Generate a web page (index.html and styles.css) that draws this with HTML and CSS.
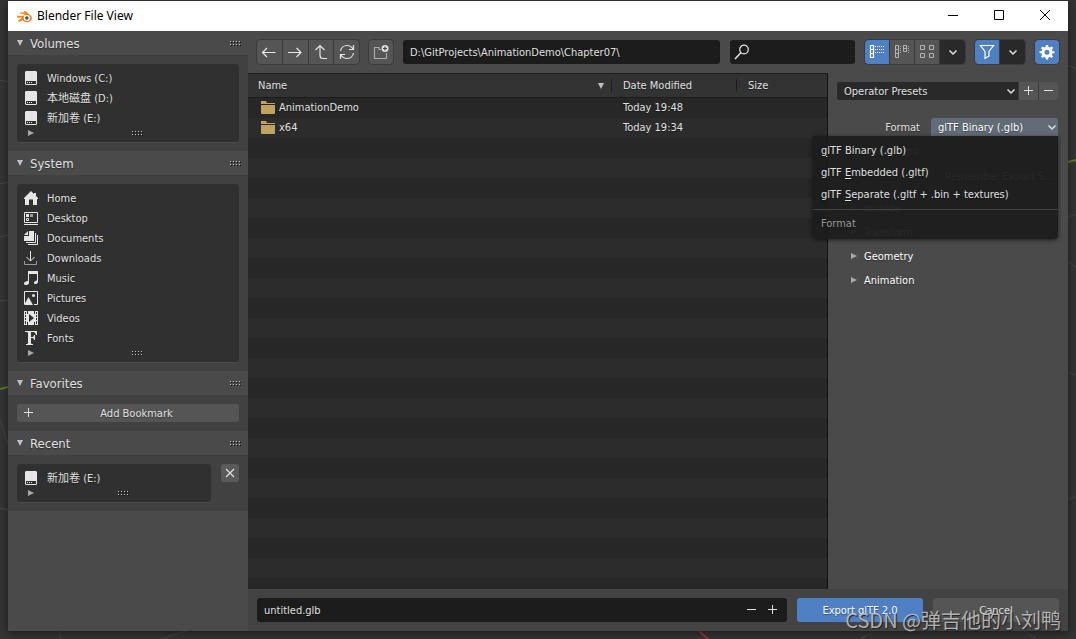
FILE: index.html
```html
<!DOCTYPE html>
<html lang="en">
<head>
<meta charset="utf-8">
<title>Blender File View</title>
<link rel="stylesheet" href="styles.css">
</head>
<body>
<svg class="viewport" viewBox="0 0 1076 639" preserveAspectRatio="none" aria-hidden="true">
  <g stroke="#464646" fill="none">
    <path d="M0 80l8 2M0 184l8-2M0 237l8-2M0 301l8-1M0 420l8 25M0 508l8 2M59 631l2 8M160 639l26-8M860 639l12-6M1024 631l14 8M1068 65l8 4M1068 217l8-3M1068 262l8 5M1068 372l8 3M1068 500l8-4"/>
  </g>
  <path d="M0 389l8-2M1068 162l8-2" stroke="#5c7a1e" stroke-width="2"/>
  <path d="M699 631l9 8" stroke="#9c3046" stroke-width="2"/>
</svg>

<svg class="defs" aria-hidden="true">
  <symbol id="disk" viewBox="0 0 16 16">
    <path fill="#e6e6e6" d="M3 1h10l1 1v8H2V2z"/><path fill="#e6e6e6" fill-rule="evenodd" d="M2 9h12v5l-1 1H3l-1-1zm1 2v3h10v-3z"/><path fill="#e6e6e6" d="M4 12h1v1H4zM6 12h1v1H6zM8 12h1v1H8z"/>
  </symbol>
  <symbol id="dots" viewBox="0 0 12 6">
    <path fill="#141414" d="M1 2h1v1H1zM4 2h1v1H4zM7 2h1v1H7zM10 2h1v1h-1zM1 5h1v1H1zM4 5h1v1H4zM7 5h1v1H7zM10 5h1v1h-1z"/>
    <path fill="#c4c4c4" d="M0 1h1v1H0zM3 1h1v1H3zM6 1h1v1H6zM9 1h1v1H9zM0 4h1v1H0zM3 4h1v1H3zM6 4h1v1H6zM9 4h1v1H9z"/>
  </symbol>
  <symbol id="down" viewBox="0 0 8 8"><path fill="#c0c0c0" d="M1 1h6L4 7z"/></symbol>
  <symbol id="right" viewBox="0 0 8 8"><path fill="#a8a8a8" d="M1 1l6 3-6 3z"/></symbol>
  <symbol id="chevron" viewBox="0 0 10 10"><path fill="none" stroke="#e0e0e0" stroke-width="1.5" d="M1.500 3.500L5 7l3.500-3.500"/></symbol>
  <symbol id="folder" viewBox="0 0 16 16"><path fill="#c0a35c" d="M1 1h5l1 2h8v1H1zM1 5h14v8l-.5 1h-13L1 13z"/></symbol>
  <symbol id="plus" viewBox="0 0 10 10"><path stroke="#e0e0e0" d="M0 4.500h9M4.500 0v9"/></symbol>
  <symbol id="minus" viewBox="0 0 10 10"><path stroke="#e0e0e0" d="M0 4.500h9"/></symbol>
</svg>

<div class="window">
  <header class="titlebar">
    <svg class="logo" viewBox="0 0 16 14" aria-hidden="true">
      <path fill="#f08219" d="M8.300.8L15 6.200c1.400 1.700 1 4.100-.5 5.500-2.600 2.500-7 1.900-8.700-.8L2.500 13 1 11.500 5.500 8H0V6.300h4.500L9 6 7 4H3V2.600h5.400L7.200 1.500z"/>
      <circle cx="10.500" cy="8.600" r="3.300" fill="#fff"/><circle cx="10.500" cy="8.600" r="1.900" fill="#265787"/>
    </svg>
    <h1 class="title">Blender File View</h1>
    <div class="caption">
      <button aria-label="Minimize"><svg viewBox="0 0 12 12"><path d="M1 5.500h10"/></svg></button>
      <button aria-label="Maximize"><svg viewBox="0 0 12 12"><path d="M1.500.5h9v9h-9z"/></svg></button>
      <button aria-label="Close"><svg viewBox="0 0 12 12"><path d="M1 0l10 10M11 0L1 10"/></svg></button>
    </div>
  </header>

  <div class="content">
    <aside class="sidebar">
      <section class="panel">
        <h2 class="panel-head"><svg class="tri"><use href="#down"/></svg>Volumes<svg class="dots"><use href="#dots"/></svg></h2>
        <div class="panel-body">
          <div class="box">
            <button class="place"><svg class="icon"><use href="#disk"/></svg>Windows (C:)</button>
            <button class="place"><svg class="icon"><use href="#disk"/></svg>本地磁盘 (D:)</button>
            <button class="place"><svg class="icon"><use href="#disk"/></svg>新加卷 (E:)</button>
            <div class="box-foot"><svg class="tri"><use href="#right"/></svg><svg class="dots"><use href="#dots"/></svg></div>
          </div>
        </div>
      </section>

      <section class="panel">
        <h2 class="panel-head"><svg class="tri"><use href="#down"/></svg>System<svg class="dots"><use href="#dots"/></svg></h2>
        <div class="panel-body">
          <div class="box">
            <button class="place"><svg class="icon" viewBox="0 0 16 16"><path fill="#e6e6e6" d="M8 1L1 8v1h1v6h4V9.500h4V15h4V9h1V8l-2-2V3h-2v1z"/></svg>Home</button>
            <button class="place"><svg class="icon" viewBox="0 0 16 16"><path fill="none" stroke="#e6e6e6" d="M1.500 2.500h13v10h-13z"/><path fill="#e6e6e6" d="M1 14h14v1H1zM3 4h3v3H3z"/><path fill="#999" d="M7 4h3v3H7z"/><path fill="none" stroke="#e6e6e6" d="M3.500 8.500h2v2h-2z"/></svg>Desktop</button>
            <button class="place"><svg class="icon" viewBox="0 0 16 16"><path fill="#e6e6e6" d="M6 1h5v10H1V6h5zM5 1v4H1z"/><path fill="none" stroke="#e6e6e6" d="M12.500 3v9.500H3M14.500 5v9.500H5"/></svg>Documents</button>
            <button class="place"><svg class="icon" viewBox="0 0 16 16"><path fill="none" stroke="#e6e6e6" d="M7.500 1v10M3.500 7l4 4 4-4"/><path fill="none" stroke="#999" d="M1.500 11v3.500h12V11"/></svg>Downloads</button>
            <button class="place"><svg class="icon" viewBox="0 0 16 16"><path fill="#e6e6e6" d="M5 1h10v11c0 2-4 3-4 1 0-1.500 1.500-2.500 3-2.500V4H6v9c0 2-5 3-5 .8C1 12 3 11 5 11z"/></svg>Music</button>
            <button class="place"><svg class="icon" viewBox="0 0 16 16"><path fill="none" stroke="#e6e6e6" d="M1.500 14V1.500h13v13H11"/><path fill="#e6e6e6" d="M1 15l4.500-8 4.500 8z"/><circle cx="10.500" cy="5.500" r="1.500" fill="#e6e6e6"/></svg>Pictures</button>
            <button class="place"><svg class="icon" viewBox="0 0 16 16"><path fill="#e6e6e6" fill-rule="evenodd" d="M1 1h14v14H1zM2 2v2h1V2zm0 3v2h1V5zm0 3v2h1V8zm0 3v3h1v-3zM13 2v2h1V2zm0 3v2h1V5zm0 3v2h1V8zm0 3v3h1v-3zM6 4v8l5-4z"/><path stroke="#303030" d="M4.500 1v3M4.500 12v3M11.500 1v3M11.500 12v3"/></svg>Videos</button>
            <button class="place"><svg class="icon" viewBox="0 0 16 16"><path fill="#e6e6e6" d="M2 1h12v4h-1c-.3-2-1.500-3-3-3H8v5h1c1.200 0 2-.5 2-2h1v5h-1c0-1.500-.8-2-2-2H8v5c0 1 1 1 2 1v1H3v-1c1 0 2 0 2-1V3c0-1-1-1-3-1z"/></svg>Fonts</button>
            <div class="box-foot"><svg class="tri"><use href="#right"/></svg><svg class="dots"><use href="#dots"/></svg></div>
          </div>
        </div>
      </section>

      <section class="panel">
        <h2 class="panel-head"><svg class="tri"><use href="#down"/></svg>Favorites<svg class="dots"><use href="#dots"/></svg></h2>
        <div class="panel-body">
          <button class="bookmark"><svg class="sign"><use href="#plus"/></svg><span>Add Bookmark</span></button>
        </div>
      </section>

      <section class="panel">
        <h2 class="panel-head"><svg class="tri"><use href="#down"/></svg>Recent<svg class="dots"><use href="#dots"/></svg></h2>
        <div class="panel-body recent">
          <div class="box">
            <button class="place"><svg class="icon"><use href="#disk"/></svg>新加卷 (E:)</button>
            <div class="box-foot"><svg class="tri"><use href="#right"/></svg><svg class="dots"><use href="#dots"/></svg></div>
          </div>
          <button class="clear" aria-label="Clear recent"><svg class="sign" viewBox="0 0 10 10"><path stroke="#e0e0e0" stroke-width="1.200" d="M1 1l8 8M9 1L1 9"/></svg></button>
        </div>
      </section>
    </aside>

    <main class="browser">
      <div class="toolbar">
        <div class="group nav">
          <button class="tool" aria-label="Back"><svg class="glyph" viewBox="0 0 16 16"><path d="M1.500 8.500h13M6 4L1.500 8.500 6 13"/></svg></button>
          <button class="tool" aria-label="Forward"><svg class="glyph" viewBox="0 0 16 16"><path d="M1 8.500h13M9.500 4L14 8.500 9.500 13"/></svg></button>
          <button class="tool" aria-label="Parent directory"><svg class="glyph" viewBox="0 0 16 16"><path d="M2.500 6L7 1.500 11.500 6M7 2v9.500q0 3 3 3h4"/></svg></button>
          <button class="tool" aria-label="Refresh"><svg class="glyph" viewBox="0 0 16 16"><path d="M1.500 7C2 3.500 5 1.500 8 1.500c2.500 0 4.500 1.200 6 3.500M14.500 1v4.500H10M14.500 9c-.5 3.500-3.500 5.500-6.500 5.500-2.500 0-4.500-1.200-6-3.500M1.500 15v-4.500H6"/></svg></button>
        </div>
        <div class="group">
          <button class="tool" aria-label="New folder"><svg class="glyph" viewBox="0 0 16 16"><path stroke="#aaa" d="M8 5.500H6V3.500H1.500v11h12V9"/><circle cx="12" cy="4.500" r="3.500" fill="#e0e0e0" stroke="none"/><path stroke="#444" d="M12 2.500v4M10 4.500h4"/></svg></button>
        </div>
        <input class="field path" aria-label="Directory" value="D:\GitProjects\AnimationDemo\Chapter07\">
        <label class="field search"><svg class="glyph" viewBox="0 0 16 16"><circle cx="10" cy="5.500" r="4.300"/><path d="M7 8.500L1 15" stroke-width="1.500"/></svg><input type="search" aria-label="Search"></label>
        <div class="group">
          <button class="tool on" aria-label="Vertical list"><svg class="glyph" viewBox="0 0 16 16"><path d="M1.500 1.500h3v12h-3zM1.500 5.500h3M1.500 9.500h3"/><path stroke-dasharray="1 1" d="M6 2.500h10M6 5.500h10M6 8.500h10"/></svg></button>
          <button class="tool" aria-label="Horizontal list"><svg class="glyph dim" viewBox="0 0 16 16"><path d="M1.500 1.500h3v12h-3zM1.500 5.500h3M1.500 9.500h3M9.500 1.500h3v6h-3zM9.500 4.500h3"/><path stroke-dasharray="1 1" d="M6.500 2v8M14.500 2v8"/></svg></button>
          <button class="tool" aria-label="Thumbnails"><svg class="glyph dim" viewBox="0 0 16 16"><path d="M1.500 1.500h4v4h-4zM10.500 1.500h4v4h-4zM1.500 9.500h4v4h-4zM10.500 9.500h4v4h-4z"/></svg></button>
          <button class="tool dark" aria-label="Display settings"><svg class="sign"><use href="#chevron"/></svg></button>
        </div>
        <div class="group">
          <button class="tool on" aria-label="Filter"><svg class="glyph" viewBox="0 0 16 16"><path d="M1.500 1.500h13L10 7.500V12l-4 2.500v-7z"/></svg></button>
          <button class="tool dark" aria-label="Filter settings"><svg class="sign"><use href="#chevron"/></svg></button>
        </div>
        <div class="group">
          <button class="tool on" aria-label="Toggle options"><svg class="glyph" viewBox="0 0 16 16"><path fill="#fff" stroke="none" fill-rule="evenodd" d="M7 1h2l.5 2 1.500.6L13 2.500 14 4l-1.200 1.700.6 1.300 2.100.5v1.500l-2.100.6-.6 1.400L14 12.500 12.500 14l-1.700-1.200-1.300.6L9 15.500H7l-.5-2.100-1.300-.6L3.500 14 2 12.500l1.200-1.500-.6-1.400-2.100-.6V7.500L2.600 7l.6-1.300L2 4l1.500-1.500L5 3.600 6.500 3zM8 5.700a2.500 2.500 0 100 5 2.500 2.500 0 000-5z"/></svg></button>
        </div>
      </div>

      <div class="middle">
        <div class="files">
          <table class="table">
            <thead>
              <tr><th><span class="sort">Name<svg class="tri"><use href="#down"/></svg></span></th><th class="date">Date Modified</th><th class="size">Size</th></tr>
            </thead>
            <tbody>
              <tr><td><span class="file"><svg class="icon"><use href="#folder"/></svg>AnimationDemo</span></td><td>Today 19:48</td><td></td></tr>
              <tr><td><span class="file"><svg class="icon"><use href="#folder"/></svg>x64</span></td><td>Today 19:34</td><td></td></tr>
            </tbody>
          </table>
        </div>

        <aside class="options">
          <div class="presets">
            <button class="preset">Operator Presets<svg class="sign"><use href="#chevron"/></svg></button>
            <button class="small" aria-label="Add preset"><svg class="sign"><use href="#plus"/></svg></button>
            <button class="small" aria-label="Remove preset"><svg class="sign"><use href="#minus"/></svg></button>
          </div>
          <div class="format">
            <label for="format">Format</label>
            <div class="select">
              <select id="format"><option>glTF Binary (.glb)</option><option>glTF Embedded (.gltf)</option><option>glTF Separate (.gltf + .bin + textures)</option></select>
              <svg class="sign"><use href="#chevron"/></svg>
            </div>
            <div class="menu" role="menu">
              <button role="menuitem"><u>g</u>lTF Binary (.glb)</button>
              <button role="menuitem">glTF <u>E</u>mbedded (.gltf)</button>
              <button role="menuitem">glTF <u>S</u>eparate (.gltf + .bin + textures)</button>
              <div class="menu-title">Format</div>
            </div>
          </div>
          <div class="property"><span>Copyright</span></div>
          <div class="property"><span></span><span>Remember Export S...</span></div>
          <div class="folds">
            <button class="fold"><svg class="tri"><use href="#right"/></svg>Include</button>
            <button class="fold"><svg class="tri"><use href="#right"/></svg>Transform</button>
            <button class="fold"><svg class="tri"><use href="#right"/></svg>Geometry</button>
            <button class="fold"><svg class="tri"><use href="#right"/></svg>Animation</button>
          </div>
        </aside>
      </div>

      <footer class="bottom">
        <div class="field name">
          <input aria-label="File name" value="untitled.glb">
          <button aria-label="Decrement"><svg class="sign"><use href="#minus"/></svg></button>
          <button aria-label="Increment"><svg class="sign"><use href="#plus"/></svg></button>
        </div>
        <button class="action primary">Export glTF 2.0</button>
        <button class="action">Cancel</button>
      </footer>
    </main>
  </div>
</div>
<div class="watermark">CSDN @弹吉他的小刘鸭</div>
</body>
</html>
```
FILE: styles.css
```css
* { box-sizing: border-box; }

body {
  margin: 0;
  min-height: 100vh;
  padding: 1px 8px 8px;
  display: flex;
  background: #343434;
  color: #e0e0e0;
  font: 11px/15px "DejaVu Sans Condensed", "DejaVu Sans", "Noto Sans CJK SC", sans-serif;
  text-shadow: 0 1px 1px rgba(0, 0, 0, .4);
}

button, input, select {
  margin: 0;
  padding: 0;
  border: 0;
  background: none;
  color: inherit;
  font: inherit;
  text-shadow: inherit;
  outline: 0;
}

svg { display: block; flex: none; }
.defs { position: absolute; width: 0; height: 0; }
.viewport { position: absolute; inset: 0; width: 100%; height: 100%; }

.icon, .glyph { width: 16px; height: 16px; }
.glyph { fill: none; stroke: #e6e6e6; stroke-width: 1.2; }
.glyph.dim { stroke: #b4b4b4; stroke-width: 1; }
.sign { width: 10px; height: 10px; }
.tri { width: 8px; height: 8px; }
.dots { width: 12px; height: 6px; }

.window {
  position: relative;
  flex: 1;
  display: flex;
  flex-direction: column;
  background: #4a4a4a;
  box-shadow: 0 2px 8px rgba(0, 0, 0, .5);
}

/* Title bar */
.titlebar {
  display: flex;
  align-items: center;
  height: 30px;
  padding-left: 9px;
  gap: 5px;
  background: #fff;
  color: #000;
  text-shadow: none;
}
.logo { width: 15px; height: 13px; }
.title { margin: 0; font: 12px/16px "Noto Sans", sans-serif; }
.caption { display: flex; margin-left: auto; }
.caption button { width: 46px; height: 30px; display: grid; place-items: center; }
.caption svg { width: 12px; height: 12px; fill: none; stroke: #000; }

.content { flex: 1; display: flex; }

/* Sidebar */
.sidebar { width: 240px; flex: none; }
.panel { background: #414141; }
.panel-head {
  display: flex;
  align-items: center;
  gap: 6px;
  height: 24px;
  margin: 0;
  padding: 0 6px 0 8px;
  background: #4a4a4a;
  font-size: 13px;
  font-weight: normal;
}
.panel-head .dots { margin-left: auto; }
.panel-body { padding: 9px; }
.box {
  padding-top: 4px;
  border-radius: 3px;
  background: #303030;
  box-shadow: 0 1px 0 #4a4a4a;
}
.place {
  display: flex;
  align-items: center;
  gap: 8px;
  width: 100%;
  height: 20px;
  padding-left: 6px;
}
.box-foot {
  display: grid;
  grid-template-columns: 1fr auto 1fr;
  height: 14px;
  padding: 1px 0 0 20px;
}
.box-foot .tri { margin-left: -10px; }
.box-foot .dots { margin-top: 1px; }
.bookmark {
  display: flex;
  align-items: center;
  width: 100%;
  height: 18px;
  padding-left: 7px;
  border-radius: 3px;
  background: #555;
}
.bookmark span { flex: 1; }
.recent { display: flex; align-items: flex-start; gap: 10px; }
.recent .box { flex: 1; }
.clear {
  display: grid;
  place-items: center;
  width: 18px;
  height: 18px;
  border-radius: 3px;
  background: #5a5a5a;
}

/* Toolbar */
.browser { flex: 1; min-width: 0; display: flex; flex-direction: column; }
.toolbar { display: flex; gap: 10px; height: 42px; padding: 9px; }
.group {
  display: flex;
  gap: 1px;
  border-radius: 4px;
  background: #3a3a3a;
  box-shadow: 0 0 0 1px #3c3c3c;
  overflow: hidden;
}
.tool { display: grid; place-items: center; width: 24px; background: #555; }
.nav { width: 102px; }
.nav .tool { flex: 1; }
.tool.on { background: #5080c4; }
.tool.on .glyph { stroke: #fff; }
.tool.dark { width: 25px; background: #292929; }
.field { border-radius: 3px; background: #1c1c1c; min-width: 0; }
.path { flex: 320 1 0; padding: 0 7px; }
.search { flex: 123 1 0; display: flex; align-items: center; padding: 0 4px; }
.search input { flex: 1; min-width: 0; }

/* File list */
.middle { flex: 1; display: flex; }
.files {
  flex: 1;
  border-right: 1px solid #111;
  background: repeating-linear-gradient(#272727 0 20px, #2c2c2c 20px 40px) 0 25px;
}
.table { width: 100%; border-collapse: collapse; table-layout: fixed; }
.table th {
  height: 24px;
  padding: 0 10px;
  border: solid #1c1c1c;
  border-width: 1px 0;
  background: linear-gradient(#1f1f1f, #1f1f1f) 0 center / 1px 13px no-repeat #333;
  text-align: left;
  font-weight: normal;
}
.table th:first-child { background: #333; }
.table .date { width: 125px; }
.table .size { width: 91px; }
.table td { height: 20px; padding: 0 10px; }
.table th + th, .table td + td { padding-left: 12px; }
.sort { display: flex; align-items: center; justify-content: space-between; margin-right: -4px; }
.file { display: flex; align-items: center; gap: 3px; }
.file .icon { margin-left: 2px; }

/* Export options */
.options { width: 240px; flex: none; padding: 9px 10px 9px 9px; }
.presets { display: flex; gap: 1px; height: 18px; border-radius: 3px; overflow: hidden; background: #3a3a3a; }
.preset {
  flex: 1;
  display: flex;
  align-items: center;
  justify-content: space-between;
  padding: 0 2px 0 7px;
  background: #292929;
}
.small { width: 19px; display: grid; place-items: center; background: #555; }
.format {
  position: relative;
  display: flex;
  align-items: center;
  justify-content: flex-end;
  gap: 11px;
  height: 18px;
  margin-top: 18px;
}
.select { position: relative; width: 127px; }
.select select {
  appearance: none;
  display: block;
  width: 100%;
  height: 18px;
  padding: 0 16px 0 7px;
  border-radius: 3px 3px 0 0;
  background: #636b77;
  color: #fff;
}
.select .sign { position: absolute; right: 1px; top: 4px; pointer-events: none; }
.menu {
  position: absolute;
  top: 100%;
  right: 0;
  z-index: 1;
  width: 245px;
  padding: 3px 0 0;
  border-radius: 0 0 4px 4px;
  background: rgba(28, 28, 28, .95);
  box-shadow: 0 1px 4px rgba(0, 0, 0, .6);
}
.menu button { display: block; width: 100%; height: 22px; padding: 0 8px; text-align: left; }
.menu u { text-underline-offset: 2px; }
.menu-title {
  margin-top: 4px;
  padding: 6px 8px 8px;
  border-top: 1px solid #444;
  color: #999;
}
.property {
  display: grid;
  grid-template-columns: 83px 1fr;
  column-gap: 25px;
  height: 18px;
  margin-top: 7px;
  line-height: 18px;
}
.property span:first-child { text-align: right; }
.folds { margin-top: 10px; }
.fold {
  display: flex;
  align-items: center;
  gap: 6px;
  width: 100%;
  height: 24px;
  padding-left: 13px;
  color: #fff;
}

/* Bottom bar */
.bottom { display: flex; gap: 10px; height: 42px; padding: 9px; background: #434343; }
.name { flex: 1; display: flex; align-items: center; padding: 0 4px 0 7px; }
.name input { flex: 1; min-width: 0; }
.name button { display: grid; place-items: center; width: 21px; height: 24px; }
.action { width: 126px; border-radius: 3px; background: #555; }
.action.primary { background: #5080c4; color: #fff; }

.watermark {
  position: absolute;
  right: 15px;
  bottom: 5px;
  z-index: 2;
  color: rgba(200, 200, 200, .85);
  font: 20px/28px "Noto Sans CJK SC", sans-serif;
  text-shadow: 1px 1px 1px #222;
  pointer-events: none;
}
```
